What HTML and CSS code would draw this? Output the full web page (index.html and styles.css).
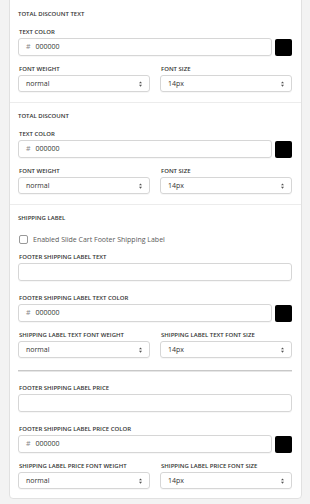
FILE: index.html
```html
<!DOCTYPE html>
<html lang="en">
<head>
    <meta charset="UTF-8">
    <meta name="viewport" content="width=device-width, initial-scale=1.0">
    <title>Slide Cart Footer Settings</title>
    <link rel="stylesheet" href="styles.css">
</head>
<body>
    <div class="card">
        <div class="section">
            <div class="title">Total Discount Text</div>
            <div class="field">
                <label>Text Color</label>
                <div class="color-row">
                    <div class="input"><span class="hash">#</span>000000</div>
                    <span class="swatch"></span>
                </div>
            </div>
            <div class="row">
                <div class="field">
                    <label>Font Weight</label>
                    <div class="select">normal<svg class="arrows" width="3" height="6" viewBox="0 0 4 7"><path d="M2 0L4 2.6H0Z M2 7L4 4.4H0Z" fill="#555"/></svg></div>
                </div>
                <div class="field">
                    <label>Font Size</label>
                    <div class="select">14px<svg class="arrows" width="3" height="6" viewBox="0 0 4 7"><path d="M2 0L4 2.6H0Z M2 7L4 4.4H0Z" fill="#555"/></svg></div>
                </div>
            </div>
        </div>

        <div class="section">
            <div class="title">Total Discount</div>
            <div class="field">
                <label>Text Color</label>
                <div class="color-row">
                    <div class="input"><span class="hash">#</span>000000</div>
                    <span class="swatch"></span>
                </div>
            </div>
            <div class="row">
                <div class="field">
                    <label>Font Weight</label>
                    <div class="select">normal<svg class="arrows" width="3" height="6" viewBox="0 0 4 7"><path d="M2 0L4 2.6H0Z M2 7L4 4.4H0Z" fill="#555"/></svg></div>
                </div>
                <div class="field">
                    <label>Font Size</label>
                    <div class="select">14px<svg class="arrows" width="3" height="6" viewBox="0 0 4 7"><path d="M2 0L4 2.6H0Z M2 7L4 4.4H0Z" fill="#555"/></svg></div>
                </div>
            </div>
        </div>

        <div class="section last">
            <div class="title">Shipping Label</div>
            <div class="check">
                <span class="box"></span>
                <span class="check-text">Enabled Slide Cart Footer Shipping Label</span>
            </div>
            <div class="field text">
                <label>Footer Shipping Label Text</label>
                <div class="input"></div>
            </div>
            <div class="field">
                <label>Footer Shipping Label Text Color</label>
                <div class="color-row">
                    <div class="input"><span class="hash">#</span>000000</div>
                    <span class="swatch"></span>
                </div>
            </div>
            <div class="row">
                <div class="field">
                    <label>Shipping Label Text Font Weight</label>
                    <div class="select">normal<svg class="arrows" width="3" height="6" viewBox="0 0 4 7"><path d="M2 0L4 2.6H0Z M2 7L4 4.4H0Z" fill="#555"/></svg></div>
                </div>
                <div class="field">
                    <label>Shipping Label Text Font Size</label>
                    <div class="select">14px<svg class="arrows" width="3" height="6" viewBox="0 0 4 7"><path d="M2 0L4 2.6H0Z M2 7L4 4.4H0Z" fill="#555"/></svg></div>
                </div>
            </div>

            <hr class="sep">

            <div class="field text">
                <label>Footer Shipping Label Price</label>
                <div class="input"></div>
            </div>
            <div class="field">
                <label>Footer Shipping Label Price Color</label>
                <div class="color-row">
                    <div class="input"><span class="hash">#</span>000000</div>
                    <span class="swatch"></span>
                </div>
            </div>
            <div class="row">
                <div class="field">
                    <label>Shipping Label Price Font Weight</label>
                    <div class="select">normal<svg class="arrows" width="3" height="6" viewBox="0 0 4 7"><path d="M2 0L4 2.6H0Z M2 7L4 4.4H0Z" fill="#555"/></svg></div>
                </div>
                <div class="field">
                    <label>Shipping Label Price Font Size</label>
                    <div class="select">14px<svg class="arrows" width="3" height="6" viewBox="0 0 4 7"><path d="M2 0L4 2.6H0Z M2 7L4 4.4H0Z" fill="#555"/></svg></div>
                </div>
            </div>
        </div>
    </div>
</body>
</html>
```

FILE: styles.css
```css
body {
    margin: 0;
    background: #f3f3f3;
    font-family: "Open Sans", "Liberation Sans", sans-serif;
    color: #333;
}
.card {
    margin: -5px 0 0 9px;
    width: 291px;
    background: #fff;
    border: 1px solid #e1e1e1;
    border-radius: 4px;
}
.section {
    padding: 14px 9px 10px 8px;
    border-bottom: 1px solid #ececec;
}
.section + .section {
    padding-top: 9px;
}
.section.last {
    border-bottom: none;
    padding-bottom: 9px;
}
.title,
label {
    display: block;
    font-size: 6px;
    line-height: 9px;
    font-weight: 600;
    text-transform: uppercase;
    color: #333;
}
.title {
    margin-bottom: 9px;
}
label {
    margin-bottom: 1px;
    padding-left: 1px;
}
.field {
    margin-bottom: 9px;
}
.field.text {
    margin-bottom: 13px;
}
.row {
    display: grid;
    grid-template-columns: 1fr 1fr;
    gap: 10px;
}
.row .field {
    margin-bottom: 0;
}
.color-row {
    display: flex;
    gap: 3px;
    align-items: center;
}
.input,
.select {
    box-sizing: border-box;
    height: 18px;
    border: 1px solid #d6d6d6;
    border-radius: 3px;
    padding: 0 7px;
    font-size: 7px;
    line-height: 16px;
    color: #333;
    box-shadow: 0 1px 0 rgba(0, 0, 0, 0.03);
}
.color-row .input {
    flex: 1;
}
.hash {
    color: #888;
    margin-right: 5px;
}
.swatch {
    width: 17px;
    height: 17px;
    background: #000;
    border-radius: 2px;
}
.select {
    display: flex;
    justify-content: space-between;
    align-items: center;
    height: 17px;
}
.check {
    display: flex;
    align-items: center;
    gap: 5px;
    margin: 3px 0 7px 1px;
    height: 14px;
}
.check-text {
    font-size: 7px;
    color: #5a5a5a;
}
.box {
    width: 7px;
    height: 7px;
    border: 1px solid #999;
    border-radius: 2px;
}
.sep {
    border: none;
    border-top: 1px solid #c8c8c8;
    border-bottom: 1px solid #e6e6e6;
    margin: 12px 0 12px;
}
```
